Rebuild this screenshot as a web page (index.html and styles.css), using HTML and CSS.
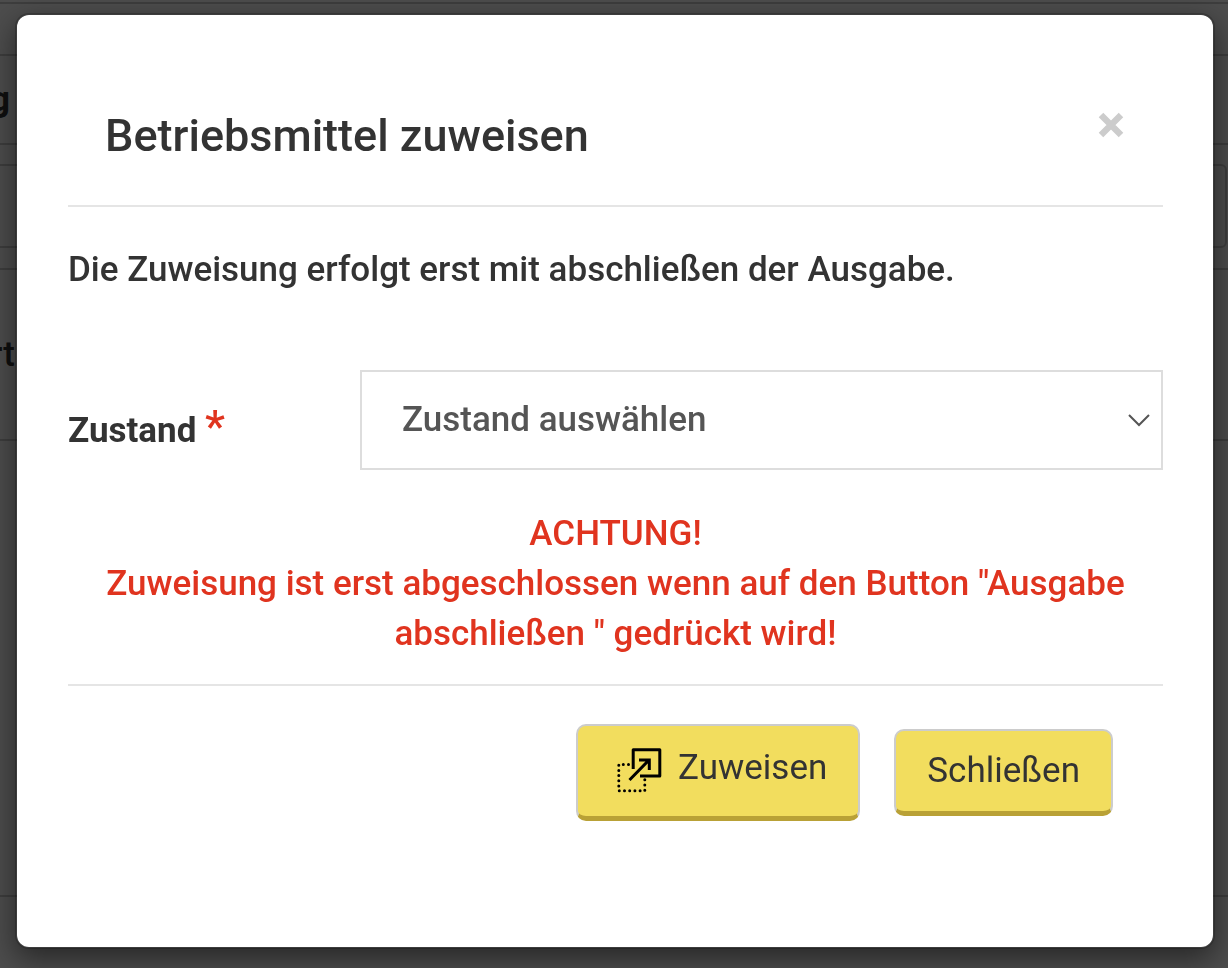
FILE: index.html
```html
<!DOCTYPE html>
<html lang="de">
<head>
<meta charset="utf-8">
<meta name="viewport" content="width=device-width, initial-scale=1">
<title>Betriebsmittel zuweisen</title>
<link rel="stylesheet" href="styles.css">
</head>
<body>
<div class="page" aria-hidden="true">
  <div class="page-bar"></div>
  <div class="page-row page-row-top"></div>
  <div class="page-row page-row-title">g</div>
  <div class="page-row page-row-gap"></div>
  <div class="page-field"></div>
  <div class="page-row page-row-space"></div>
  <div class="page-row page-row-label">rt</div>
  <div class="page-row page-row-body"></div>
</div>
<div class="backdrop">
  <div class="modal" role="dialog" aria-modal="true" aria-labelledby="modal-title">
    <header class="modal-header">
      <h1 class="modal-title" id="modal-title">Betriebsmittel zuweisen</h1>
      <button class="close" type="button" aria-label="Dialog schließen">
        <svg class="close-icon" viewBox="0 0 26 26" aria-hidden="true"><path d="M3 3L23 23M23 3L3 23" stroke="currentColor" stroke-width="6.4"/></svg>
      </button>
    </header>
    <form class="modal-body">
      <p class="intro">Die Zuweisung erfolgt erst mit abschließen der Ausgabe.</p>
      <div class="field">
        <label class="field-label" for="zustand">Zustand <span class="required">*</span></label>
        <select class="field-select" id="zustand" required>
          <option value="">Zustand auswählen</option>
        </select>
      </div>
      <p class="warning">ACHTUNG!<br>Zuweisung ist erst abgeschlossen wenn auf den Button "Ausgabe abschließen " gedrückt wird!</p>
    </form>
    <footer class="modal-footer">
      <button class="btn btn-assign" type="button">
        <svg class="btn-icon" viewBox="0 0 46 46" fill="none" stroke="#000" aria-hidden="true">
          <path d="M17.2 22V2.700H43.800V29H24" stroke-width="3" stroke-linejoin="round"/>
          <path d="M13.500 33L32.500 13.500M23 13H33.300V23" stroke-width="3"/>
          <path d="M12.500 17.500H2.800V43.700H28.800V30" stroke-width="3" stroke-linecap="round" stroke-dasharray="0 5.200"/>
        </svg>
        Zuweisen
      </button>
      <button class="btn" type="button">Schließen</button>
    </footer>
  </div>
</div>
</body>
</html>
```
FILE: styles.css
```css
* {
  box-sizing: border-box;
}

body {
  margin: 0;
  background: #fff;
  color: #333;
  font-family: Roboto, "Liberation Sans", sans-serif;
  font-size: 35px;
  font-weight: 500;
  line-height: 50px;
}

h1,
p {
  margin: 0;
}

.page {
  display: flex;
  flex-direction: column;
  height: 100vh;
  overflow: hidden;
}

.page-bar {
  height: 2px;
}

.page-row {
  display: flex;
  align-items: center;
  border-top: 2px solid #ccc;
}

.page-row-top {
  height: 52px;
}

.page-row-title {
  height: 89px;
  text-indent: -10px;
  font-weight: 700;
}

.page-row-gap {
  height: 21px;
}

.page-field {
  height: 84px;
  margin-left: -8px;
  margin-right: 1px;
  border: 2px solid #ccc;
  border-radius: 6px;
}

.page-row-space {
  height: 20px;
  border-top: 0;
}

.page-row-label {
  height: 171px;
  text-indent: -10px;
}

.page-row-body {
  height: 458px;
  border-bottom: 2px solid #ccc;
}

.backdrop {
  position: fixed;
  inset: 0;
  padding: 13px 13px 19px 15px;
  background: rgba(0, 0, 0, 0.7);
  overflow: auto;
}

.modal {
  min-height: 100%;
  padding: 51px 50px 100px 51px;
  background: #fff;
  background-clip: padding-box;
  border: 2px solid rgba(0, 0, 0, 0.2);
  border-radius: 14px;
  box-shadow: 0 10px 30px rgba(0, 0, 0, 0.5);
}

.modal-header {
  display: flex;
  justify-content: space-between;
  padding: 38px 38px 38px 37px;
  border-bottom: 2px solid #e5e5e5;
}

.modal-title {
  font-size: 45px;
  font-weight: 500;
  line-height: 63px;
}

.close {
  display: flex;
  width: 28px;
  height: 42px;
  padding: 0;
  align-items: center;
  justify-content: center;
  border: 0;
  background: none;
  color: #ccc;
}

.close-icon {
  width: 26px;
  height: 26px;
}

.modal-body {
  padding: 38px 0 25px;
}

.field {
  display: flex;
  align-items: center;
  margin: 75px 0 39px;
}

.field-label {
  width: 292px;
  padding-top: 18px;
  font-weight: 700;
}

.required {
  color: #e0341f;
  font-size: 45px;
  font-weight: 500;
  line-height: 50px;
}

.field-select {
  flex: 1;
  min-width: 0;
  height: 100px;
  padding: 0 40px;
  border: 2px solid #ddd;
  border-radius: 0;
  appearance: none;
  background: #fff url("data:image/svg+xml,%3Csvg xmlns='http://www.w3.org/2000/svg' viewBox='0 0 24 14'%3E%3Cpath d='M2 2L12 12L22 2' fill='none' stroke='%23555' stroke-width='2'/%3E%3C/svg%3E") no-repeat right 10px center / 24px 14px;
  color: #555;
  font: inherit;
}

.warning {
  color: #e0341f;
  text-align: center;
}

.modal-footer {
  display: flex;
  align-items: center;
  justify-content: flex-end;
  gap: 34px;
  padding: 38px 50px 0;
  border-top: 2px solid #e5e5e5;
}

.btn {
  display: flex;
  align-items: center;
  padding: 15px 31px;
  border: 2px solid #ccc;
  border-bottom: 5px solid #b9a136;
  border-radius: 10px;
  background: #f2dd5e;
  color: #333;
  font: inherit;
  font-weight: 400;
}

.btn-assign {
  align-items: flex-end;
  gap: 16px;
  padding: 17px 31px 23px 38px;
}

.btn-icon {
  width: 46px;
  height: 46px;
}
```
